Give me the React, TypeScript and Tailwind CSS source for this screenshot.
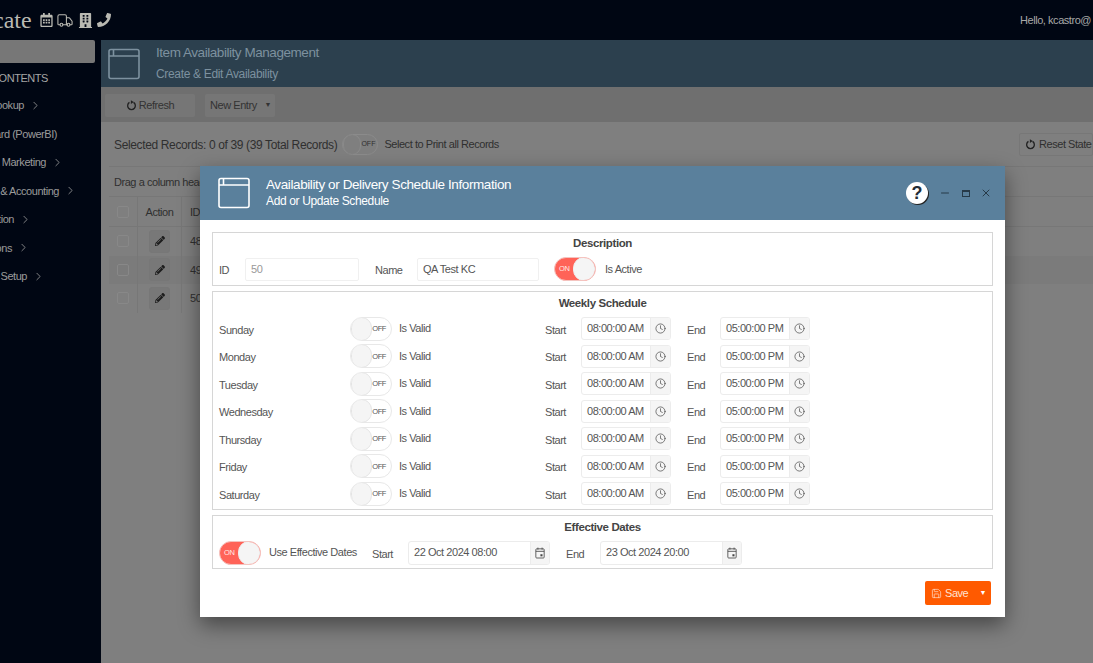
import React from "react";
import { Truck, Clock, Save, ChevronRight, X, Minus } from "lucide-react";
import { FaBuilding, FaPhone, FaRegCalendarAlt, FaPencilAlt } from "react-icons/fa";

const WindowIcon = ({ className }: { className: string }) => (
  <svg viewBox="0 0 32 32" className={className} fill="none" stroke="currentColor" strokeWidth="1.6">
    <rect x="1" y="1.5" width="30" height="29" rx="2" />
    <path d="M1 8h30M5.5 1.5v6.5" />
  </svg>
);

const Refresh = ({ className }: { className: string }) => (
  <svg viewBox="0 0 14 14" className={className} fill="none" stroke="currentColor" strokeWidth="1.7">
    <path d="M9.6 3.1A4.9 4.9 0 1 1 4.4 3.1" />
    <path d="M6.2 0.4v4.6l3.6-2.3z" fill="currentColor" stroke="none" />
  </svg>
);

const CalIcon = () => (
  <svg viewBox="0 0 12 14" className="w-[10px] h-[12px] text-[#444]" fill="none" stroke="currentColor" strokeWidth="1">
    <rect x="1" y="2" width="10" height="11" rx="1" />
    <path d="M1 5h10M3.5 0.5v2.5M8.5 0.5v2.5" />
    <rect x="6.5" y="8.5" width="2.5" height="2.5" fill="currentColor" stroke="none" />
  </svg>
);

const Toggle = ({ on }: { on?: boolean }) =>
  on ? (
    <div className="w-[42px] h-[24px] rounded-full bg-[#ff6358] border border-[#f4c4c0] flex items-center justify-between shrink-0 overflow-hidden">
      <span className="text-[7.5px] text-[#ffe9e7] pl-[4px]">ON</span>
      <span className="w-[22px] h-[24px] rounded-full bg-[#f5f5f5] border border-[#eee]" />
    </div>
  ) : (
    <div className="w-[42px] h-[24px] rounded-full bg-white border border-[#e8e8e8] flex items-center justify-between shrink-0 overflow-hidden">
      <span className="w-[22px] h-[24px] rounded-full bg-[#f5f5f5] border border-[#e4e4e4]" />
      <span className="text-[7.5px] text-[#555] pr-[5px]">OFF</span>
    </div>
  );

const TimeInput = ({ value }: { value: string }) => (
  <div className="w-[90px] h-[23px] flex border border-[#ececec] rounded-[3px] overflow-hidden shrink-0">
    <span className="flex-1 pl-[5px] leading-[20px] text-[#555] whitespace-nowrap">{value}</span>
    <span className="w-[20px] bg-[#f5f5f5] border-l border-[#ececec] flex items-center justify-center">
      <Clock className="w-[11px] h-[11px] text-[#444]" strokeWidth={1.5} />
    </span>
  </div>
);

const DateInput = ({ value }: { value: string }) => (
  <div className="w-[142px] h-[24px] flex border border-[#ececec] rounded-[3px] overflow-hidden shrink-0">
    <span className="flex-1 pl-[5px] leading-[20px] text-[#555] whitespace-nowrap">{value}</span>
    <span className="w-[19px] bg-[#f5f5f5] border-l border-[#ececec] flex items-center justify-center">
      <CalIcon />
    </span>
  </div>
);

const days = ["Sunday", "Monday", "Tuesday", "Wednesday", "Thursday", "Friday", "Saturday"];
const nav = [
  ["Lookup", true, "w-[42px]"],
  ["Dashboard (PowerBI)", false, "w-[57px]"],
  ["Sales & Marketing", true, "w-[64px]"],
  ["Finance & Accounting", true, "w-[77px]"],
  ["Administration", true, "w-[32px]"],
  ["Reservations", true, "w-[30px]"],
  ["System Setup", true, "w-[45px]"],
] as const;

export default function App() {
  return (
    <div className="relative w-[1093px] h-[663px] overflow-hidden bg-[#7f7f7f] text-[11px] tracking-[-0.45px] text-[#333] [font-family:Liberation_Sans,Arial,sans-serif]">
      <header className="h-[40px] bg-[#000613] flex items-center justify-between overflow-hidden">
        <div className="flex items-center text-[#b9b9b2]">
          <span className="-ml-[7px] font-[Liberation_Serif,serif] text-[24px] leading-none tracking-normal">cate</span>
          <FaRegCalendarAlt className="ml-[8px] w-[13px] h-[14px]" />
          <Truck className="ml-[3px] w-[18px] h-[17px]" strokeWidth={1.5} />
          <FaBuilding className="ml-[4px] w-[15px] h-[15px]" />
          <FaPhone className="ml-[4px] w-[14px] h-[14px]" />
        </div>
        <span className="w-[73px] whitespace-nowrap overflow-hidden text-[#a8a8a8]">Hello, kcastro@</span>
      </header>

      <div className="flex h-[623px]">
        <aside className="w-[101px] shrink-0 bg-[#000613] overflow-hidden text-[#9b9b9b]">
          <div className="w-[95px] h-[23px] bg-[#777] rounded-r-[2px]" />
          <div className="w-[48px] h-[28px] pt-[2px] flex items-center justify-end whitespace-nowrap text-[#a5a5a5]">TABLE OF CONTENTS</div>
          {nav.map(([label, arrow, w]) => (
            <div key={label} className={"h-[28.5px] flex items-center justify-end whitespace-nowrap " + w}>
              {label}
              {arrow && <ChevronRight className="ml-[5px] w-[13px] h-[13px] shrink-0" strokeWidth={1.5} />}
            </div>
          ))}
        </aside>

        <main className="flex-1 min-w-0 overflow-hidden">
          <div className="h-[47px] bg-[#2c404e] flex items-center pl-[7px] text-[#7d919f]">
            <WindowIcon className="w-[32px] h-[32px]" />
            <div className="ml-[16px]">
              <div className="text-[13.5px] leading-[20px]">Item Availability Management</div>
              <div className="text-[12px] tracking-[-0.33px] leading-[20px] mt-[1px]">Create &amp; Edit Availability</div>
            </div>
          </div>
          <div className="h-[35px] pt-[1px] bg-[#6f6f6f] flex items-center pl-[4px] gap-[10px] text-[#333] whitespace-nowrap">
            <div className="w-[90px] h-[23px] bg-[#767676] rounded-[2px] flex items-center justify-center gap-[2px]">
              <Refresh className="w-[11px] h-[11px] text-[#222]" />
              Refresh
            </div>
            <div className="w-[70px] h-[23px] bg-[#767676] rounded-[2px] flex items-center pl-[5px] justify-between pr-[4px]">
              New Entry <span className="text-[7px]">▼</span>
            </div>
          </div>
          <div className="ml-[8px] h-[541px] bg-[#7f7f7f]">
            <div className="h-[45px] flex items-center pl-[5px] text-[#2f2f2f] border-b border-[#777] whitespace-nowrap">
              <span className="text-[12px] tracking-[-0.36px] pt-[1px]">Selected Records: 0 of 39 (39 Total Records)</span>
              <div className="ml-[5px] w-[36px] h-[21px] shrink-0 rounded-full border border-[#8b8b8b] flex items-center justify-between overflow-hidden">
                <span className="w-[19px] h-[21px] rounded-full border border-[#8b8b8b]" />
                <span className="text-[7px] pr-[2px] tracking-normal">OFF</span>
              </div>
              <span className="ml-[6px]">Select to Print all Records</span>
              <div className="ml-auto w-[74px] h-[23px] border border-[#777] rounded-[2px] flex items-center pl-[5px] gap-[3px] shrink-0">
                <Refresh className="w-[11px] h-[11px] text-[#222]" />
                Reset State
              </div>
            </div>
            <div className="h-[30px] pt-[2px] flex items-center pl-[5px] text-[#2f2f2f] border-b border-[#777]">Drag a column header</div>
            <div className="h-[30px] flex items-center border-b border-[#777] text-[#2f2f2f]">
              <div className="w-[29px] h-full flex items-center justify-center border-r border-[#777]">
                <span className="w-[12px] h-[12px] border border-[#888] rounded-[2px]" />
              </div>
              <div className="w-[44px] h-full pt-[1px] flex items-center justify-center border-r border-[#777]">Action</div>
              <div className="pl-[8px] pt-[1px]">ID</div>
            </div>
            {["48", "49", "50"].map((id, i) => (
              <div key={id} className={"h-[28.5px] flex items-center text-[#2f2f2f] " + (i === 1 ? "bg-[#7b7b7b]" : "")}>
                <div className="w-[29px] h-full flex items-center justify-center border-r border-[#777]">
                  <span className="w-[12px] h-[12px] border border-[#888] rounded-[2px]" />
                </div>
                <div className="w-[44px] h-full flex items-center justify-center border-r border-[#777]">
                  <span className="w-[21px] h-[23px] bg-[#787878] border border-[#777] rounded-[3px] flex items-center justify-center">
                    <FaPencilAlt className="w-[10px] h-[10px] text-[#1c1c1c]" />
                  </span>
                </div>
                <div className="pl-[8px]">{id}</div>
              </div>
            ))}
          </div>
        </main>
      </div>

      {/* Modal */}
      <div className="absolute left-[200px] top-[166px] w-[805px] h-[451px] bg-white flex flex-col shadow-[0_8px_20px_rgba(0,0,0,0.45)]">
        <div className="h-[54px] bg-[#5a809c] flex items-center text-white shrink-0">
          <WindowIcon className="ml-[18px] w-[32px] h-[32px]" />
          <div className="ml-[16px] flex-1">
            <div className="text-[13.5px] tracking-[-0.4px] leading-[17px]">Availability or Delivery Schedule Information</div>
            <div className="text-[12px] tracking-[-0.36px] leading-[17px]">Add or Update Schedule</div>
          </div>
          <div className="w-[22px] h-[22px] rounded-full bg-white text-[#222c36] font-bold text-[18px] leading-[22px] text-center tracking-normal shadow-[1px_1px_0_#222]">?</div>
          <Minus className="ml-[11px] w-[12px] h-[12px] text-[#273a48]" />
          <span className="ml-[11px] w-[8px] h-[7px] border border-[#273a48] border-t-2" />
          <X className="ml-[10px] mr-[13px] w-[12px] h-[12px] text-[#273a48]" />
        </div>

        <div className="flex-1 px-[12px] pt-[12px] flex flex-col">
          <section className="h-[54px] border border-[#d6d6d6] flex flex-col">
            <h3 className="text-center font-bold text-[11.5px] tracking-[-0.4px] leading-[14px] mt-[3px] text-[#444]">Description</h3>
            <div className="flex items-center pl-[6px] mt-[7px] text-[#555] whitespace-nowrap">
              <span className="w-[26px] mt-[2px]">ID</span>
              <div className="w-[114px] h-[23px] border border-[#f0f0f0] rounded-[2px] pl-[5px] leading-[20px] text-[#999]">50</div>
              <span className="ml-[16px] w-[42px] mt-[2px]">Name</span>
              <div className="w-[122px] h-[23px] border border-[#f0f0f0] rounded-[2px] pl-[5px] leading-[20px]">QA Test KC</div>
              <div className="ml-[15px]"><Toggle on /></div>
              <span className="ml-[9px]">Is Active</span>
            </div>
          </section>

          <section className="mt-[5px] h-[219px] border border-[#d6d6d6]">
            <h3 className="text-center font-bold text-[11.5px] tracking-[-0.4px] leading-[14px] mt-[4px] mb-[5px] text-[#444]">Weekly Schedule</h3>
            {days.map((d) => (
              <div key={d} className="h-[27.5px] flex items-center pl-[6px] text-[#555] whitespace-nowrap">
                <span className="w-[131px] mt-[2px]">{d}</span>
                <Toggle />
                <span className="ml-[7px] w-[146px] mb-[1px]">Is Valid</span>
                <span className="w-[36px] mt-[2px]">Start</span>
                <TimeInput value="08:00:00 AM" />
                <span className="ml-[16px] w-[33px] mt-[2px]">End</span>
                <TimeInput value="05:00:00 PM" />
              </div>
            ))}
          </section>

          <section className="mt-[5px] h-[54px] border border-[#d6d6d6]">
            <h3 className="text-center font-bold text-[11.5px] tracking-[-0.4px] leading-[14px] mt-[4px] text-[#444]">Effective Dates</h3>
            <div className="flex items-center pl-[6px] mt-[7px] text-[#555] whitespace-nowrap">
              <Toggle on />
              <span className="ml-[8px] w-[103px] mb-[1px]">Use Effective Dates</span>
              <span className="w-[36px] mt-[2px]">Start</span>
              <DateInput value="22 Oct 2024 08:00" />
              <span className="ml-[16px] w-[34px] mt-[2px]">End</span>
              <DateInput value="23 Oct 2024 20:00" />
            </div>
          </section>

          <div className="mt-[12px] mr-[2px] flex justify-end">
            <div className="w-[66px] h-[24px] bg-[#ff5a00] rounded-[2px] flex items-center pl-[6px] pr-[5px] text-[#ffe3d3]">
              <Save className="w-[11px] h-[11px]" strokeWidth={1.5} />
              <span className="ml-[3px]">Save</span>
              <span className="ml-auto text-[7px] text-white">▼</span>
            </div>
          </div>
        </div>
      </div>
    </div>
  );
}
